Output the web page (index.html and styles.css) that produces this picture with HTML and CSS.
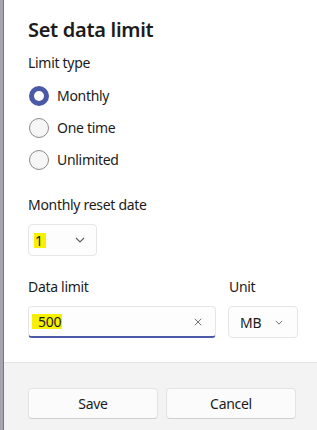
FILE: index.html
```html
<!DOCTYPE html>
<html lang="en">
<head>
  <meta charset="UTF-8">
  <meta name="viewport" content="width=device-width,initial-scale=1.0">
  <title>Set data limit</title>
  <link rel="stylesheet" href="styles.css">
</head>
<body>
  <div class="edge"></div>
  <div class="dialog">
    <div class="content">
      <h1 class="title">Set data limit</h1>

      <!-- Limit type -->
      <div class="label">Limit type</div>
      <div class="radios">
        <label class="radio checked"><span class="dot"></span>Monthly</label>
        <label class="radio"><span class="dot"></span>One time</label>
        <label class="radio"><span class="dot"></span>Unlimited</label>
      </div>

      <!-- Reset date -->
      <div class="label reset-label">Monthly reset date</div>
      <div class="select day">
        <span class="hl">1</span>
        <svg class="chev" viewBox="0 0 10 6"><path d="M1 1l4 4 4-4"/></svg>
      </div>

      <!-- Data limit + unit -->
      <div class="limit-row">
        <div class="field">
          <div class="label">Data limit</div>
          <div class="input">
            <span class="hl num">500</span>
            <svg class="clear" viewBox="0 0 10 10"><path d="M1 1l8 8M9 1l-8 8"/></svg>
          </div>
        </div>
        <div class="field unit">
          <div class="label">Unit</div>
          <div class="select">
            <span>MB</span>
            <svg class="chev small" viewBox="0 0 10 6"><path d="M1 1l4 4 4-4"/></svg>
          </div>
        </div>
      </div>
    </div>

    <div class="footer">
      <button class="btn">Save</button>
      <button class="btn">Cancel</button>
    </div>
  </div>
</body>
</html>
```

FILE: styles.css
```css
* { margin:0; padding:0; box-sizing:border-box; }
body {
  display:flex; height:430px; overflow:hidden;
  font-family:"Noto Sans", "Open Sans", sans-serif;
  color:#1b1b1b; background:#fff;
  letter-spacing:-0.3px;
}
.edge {
  width:4px; flex:none;
  background:#a5a5af;
  border-right:1px solid #767684;
}
.dialog {
  flex:1;
  display:flex; flex-direction:column;
  background:#fff;
}
.content {
  flex:1;
  padding:16px 20px 0 24px;
}
.title {
  font-size:20px; font-weight:600;
  line-height:28px;
  letter-spacing:-0.3px;
}
.label {
  font-size:14px; line-height:20px;
}
.title + .label { margin-top:9px; }

/* radios */
.radios {
  display:flex; flex-direction:column; gap:12px;
  margin-top:13px;
}
.radio {
  display:flex; align-items:center; gap:8px;
  font-size:14px; line-height:20px;
  padding-left:1px;
}
.dot {
  width:20px; height:20px; flex:none;
  border:1px solid #8a8a8a; border-radius:50%;
  background:#f6f6f6;
}
.radio.checked .dot {
  border:5px solid #4b59a7;
  background:#fff;
}

.reset-label { margin-top:25px; }

/* selects / inputs */
.select, .input {
  display:flex; align-items:center;
  height:32px;
  border:1px solid #e6e6e6; border-radius:4px;
  background:#fdfdfd;
  font-size:14px;
  padding:0 11px 0 10px;
}
.day {
  width:69px; margin-top:9px;
  justify-content:space-between;
  padding-left:5px;
}
.hl { background:#f7f000; padding:0 3px 0 1px; line-height:15px; }
.hl.num { padding:0 1px 0 6px; }
.chev {
  width:10px; height:6px;
  fill:none; stroke:#5f5f5f; stroke-width:1.1;
}
.chev.small { width:8px; height:5px; }

.limit-row {
  display:flex; gap:12px;
  margin-top:21px;
}
.field { display:flex; flex-direction:column; gap:9px; }
.field:first-child { width:188px; }
.unit { width:70px; }
.unit .label { padding-left:1px; }
.input {
  justify-content:space-between;
  border-bottom:2px solid #4b59a7;
  padding-left:3px; padding-right:13px;
}
.clear {
  width:8px; height:8px;
  fill:none; stroke:#5f5f5f; stroke-width:1.1;
}
.unit .select { justify-content:space-between; padding-left:11px; padding-right:14px; }

/* footer */
.footer {
  height:68px; flex:none;
  background:#f3f3f3;
  border-top:1px solid #e5e5e5;
  display:flex; gap:8px;
  padding:25px 20px 0 24px;
}
.btn {
  width:130px; height:31px;
  font-family:inherit; font-size:14px; color:#1b1b1b;
  letter-spacing:inherit;
  background:#fbfbfb;
  border:1px solid #e3e3e3; border-bottom-color:#cfcfcf;
  border-radius:4px;
}
```
